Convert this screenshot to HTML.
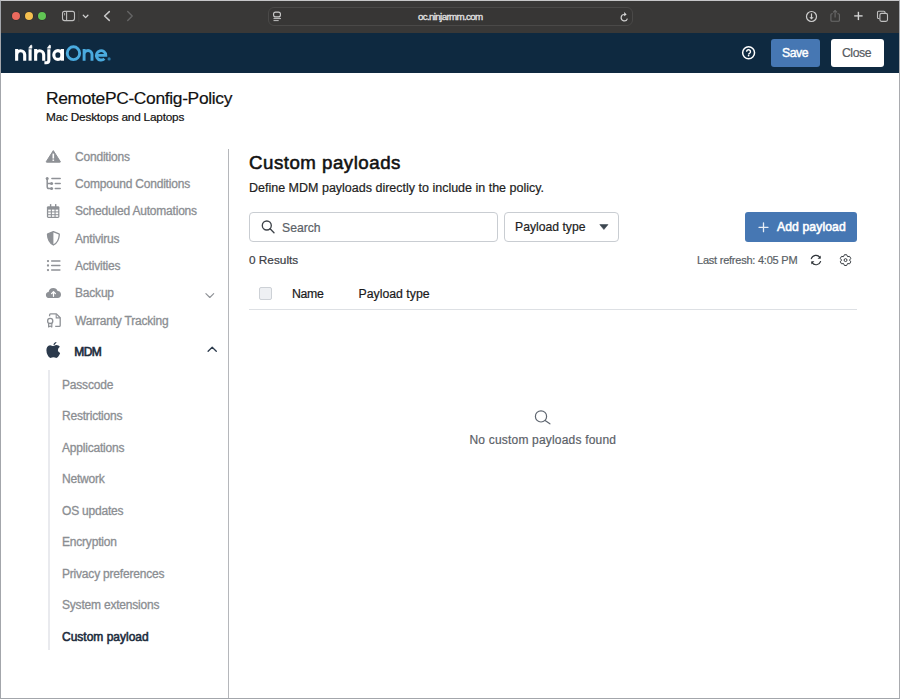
<!DOCTYPE html>
<html><head><meta charset="utf-8">
<style>
*{box-sizing:border-box;margin:0;padding:0}
html,body{width:900px;height:699px;overflow:hidden;background:#fff;font-family:"Liberation Sans",sans-serif}
.abs{position:absolute}
.t{position:absolute;line-height:1;white-space:nowrap;-webkit-text-stroke:0.2px currentColor}
.side,.sub{-webkit-text-stroke:0.3px currentColor}
.sb{-webkit-text-stroke:0.55px currentColor;font-weight:normal}
#frame{position:absolute;left:0;top:0;width:900px;height:699px;border-left:1px solid #a3a6ab;border-top:1px solid #c6c6c8;border-right:1px solid #a9abaf;border-bottom:1px solid #a3a6ab;pointer-events:none;z-index:10}
#toolbar{position:absolute;left:0;top:0;width:900px;height:33px;background:#393837}
#header{position:absolute;left:0;top:33px;width:900px;height:40px;background:#0e2940}
.side{font-size:12px;color:#8b8e92;left:75px;letter-spacing:-0.2px}
.sub{font-size:12px;color:#8b8e92;left:62px;letter-spacing:-0.2px}
svg{position:absolute;overflow:visible}
</style></head><body>
<div id="toolbar">
  <div class="abs" style="left:12.3px;top:12.2px;width:8.2px;height:8.2px;border-radius:50%;background:#ec6a5e;box-shadow:0 0 0 0.6px rgba(0,0,0,0.25)"></div>
  <div class="abs" style="left:25px;top:12.2px;width:8.2px;height:8.2px;border-radius:50%;background:#f4bf4f;box-shadow:0 0 0 0.6px rgba(0,0,0,0.25)"></div>
  <div class="abs" style="left:37.6px;top:12.2px;width:8.2px;height:8.2px;border-radius:50%;background:#61c554;box-shadow:0 0 0 0.6px rgba(0,0,0,0.25)"></div>
  <div class="abs" style="left:268px;top:7px;width:365px;height:19px;border-radius:6px;background:#373635;border:1px solid #4a4948"></div>

  <svg width="900" height="33" style="left:0;top:0">
    <g fill="none" stroke="#bfbfbf" stroke-width="1.1">
      <rect x="62.5" y="11.4" width="12" height="9.2" rx="2"/>
      <line x1="66.6" y1="11.4" x2="66.6" y2="20.6"/>
    </g>
    <rect x="64" y="13" width="1.1" height="2.4" fill="#9a9a9a"/>
    <line x1="78.8" y1="10.5" x2="78.8" y2="22" stroke="#474645" stroke-width="1"/>
    <polyline points="83.3,15.3 85.6,17.6 87.9,15.3" fill="none" stroke="#d0d0d0" stroke-width="1.3" stroke-linecap="round" stroke-linejoin="round"/>
    <polyline points="109.3,11.6 104.6,16 109.3,20.4" fill="none" stroke="#c9c9c9" stroke-width="1.5" stroke-linecap="round" stroke-linejoin="round"/>
    <polyline points="127.7,11.6 132.2,16 127.7,20.4" fill="none" stroke="#656565" stroke-width="1.4" stroke-linecap="round" stroke-linejoin="round"/>
    <g fill="none" stroke="#cfcfcf" stroke-width="1.1">
      <rect x="273.6" y="12.1" width="6.8" height="4.8" rx="2"/>
    </g>
    <line x1="273.5" y1="18.6" x2="281" y2="18.6" stroke="#cfcfcf" stroke-width="0.9"/>
    <line x1="273.5" y1="20.6" x2="278.7" y2="20.6" stroke="#cfcfcf" stroke-width="0.9"/>
    <path d="M627.4 18.6 A3.2 3.2 0 1 1 624.6 14.5" fill="none" stroke="#cfcfcf" stroke-width="1.2"/>
    <polygon points="624.2,12.1 626.6,14.4 624.2,16.3" fill="#dcdcdc"/>
    <circle cx="811.5" cy="16.5" r="5" fill="none" stroke="#cfcfcf" stroke-width="1.2"/>
    <line x1="811.5" y1="13.4" x2="811.5" y2="18" stroke="#cfcfcf" stroke-width="1.2"/>
    <polygon points="809.3,17.2 813.7,17.2 811.5,19.4" fill="#cfcfcf"/>
    <g fill="none" stroke="#6a6a6a" stroke-width="1.1">
      <path d="M832.8 13.8 H831.8 Q830.9 13.8 830.9 14.8 V20.2 Q830.9 21.2 831.9 21.2 H838.4 Q839.4 21.2 839.4 20.2 V14.8 Q839.4 13.8 838.4 13.8 H837.4"/>
      <line x1="835.1" y1="10.6" x2="835.1" y2="17.5"/>
      <polyline points="833.2,12.4 835.1,10.5 837,12.4"/>
    </g>
    <g stroke="#d2d2d2" stroke-width="1.4">
      <line x1="858.4" y1="11.8" x2="858.4" y2="20.1"/>
      <line x1="854.2" y1="15.9" x2="862.6" y2="15.9"/>
    </g>
    <g fill="none" stroke="#c0c0c0" stroke-width="1.1">
      <path d="M879.4 18.5 H878.6 Q877.5 18.5 877.5 17.4 V12.3 Q877.5 11.2 878.6 11.2 H883.9 Q885 11.2 885 12.3 V13.3"/>
      <rect x="879.9" y="13.4" width="7.6" height="8" rx="1.6"/>
    </g>
  </svg>
  <div class="t" style="left:418px;top:12px;font-size:9.8px;color:#e4e4e4;letter-spacing:-0.67px;-webkit-text-stroke:0.3px #e4e4e4">oc.ninjarmm.com</div>
</div>
<div id="header">
  <svg width="900" height="40" style="left:0;top:0">
   <g transform="translate(0,-33)">
    <g fill="none" stroke="#fff" stroke-width="3.1">
      <path d="M16.65 49 V60.7 M16.65 60.7 V54.55 A4.03 4.03 0 0 1 24.7 54.55 V60.7"/>
      <path d="M30.1 49.2 V60.7"/>
      <path d="M35.65 49 V60.7 M35.65 60.7 V54.55 A4.03 4.03 0 0 1 43.7 54.55 V60.7"/>
      <path d="M48.85 49.2 V60.3 Q48.85 62.7 46.3 62.7 H44.4"/>
      <ellipse cx="57.9" cy="55" rx="4.1" ry="4.4"/>
      <path d="M62.35 49 V60.7" stroke-width="3.3"/>
    </g>
    <polygon points="28.7,48.2 30.5,45.5 31.3,45.1 31.9,45.5 31.9,48.2" fill="#fff" stroke="#fff" stroke-width="0.6" stroke-linejoin="round"/>
    <polygon points="47.3,48.2 49.1,45.5 49.9,45.1 50.5,45.5 50.5,48.2" fill="#fff" stroke="#fff" stroke-width="0.6" stroke-linejoin="round"/>
    <g fill="none" stroke="#4aabdf" stroke-width="2.9">
      <ellipse cx="73.45" cy="53.2" rx="6.2" ry="6.45"/>
      <path d="M84.1 49 V60.7 M84.1 60.7 V54.5 A3.95 3.95 0 0 1 92 54.5 V60.7"/>
      <path d="M96.6 55.4 H105.8 A4.7 4.7 0 1 0 104.4 58.7"/>
    </g>
    <circle cx="109.1" cy="58.9" r="1.6" fill="#2b76a6"/>
    <circle cx="748.6" cy="52.7" r="5.95" fill="none" stroke="#fff" stroke-width="1.5"/>
    <path d="M746.6 51.8 A1.95 1.95 0 1 1 749.6 53.3 Q748.6 53.8 748.6 54.4" fill="none" stroke="#fff" stroke-width="1.4"/>
    <circle cx="748.6" cy="55.6" r="0.85" fill="#fff"/>
   </g>
  </svg>
  <div class="abs" style="left:771px;top:6px;width:49px;height:28px;background:#4677b3;border-radius:3px"></div>
  <div class="t sb" style="left:782.3px;top:12.5px;font-size:13.3px;color:#fff;letter-spacing:-0.5px;-webkit-text-stroke:0.45px #fff;transform:scaleX(0.92);transform-origin:0 0">Save</div>
  <div class="abs" style="left:831px;top:6px;width:53px;height:28px;background:#fff;border-radius:3px"></div>
  <div class="t" style="left:842px;top:12.5px;font-size:13.3px;color:#555a60;letter-spacing:-0.5px;transform:scaleX(0.92);transform-origin:0 0">Close</div>
</div>

<div class="t" style="left:46px;top:90px;font-size:17.4px;color:#111;letter-spacing:-0.33px">RemotePC-Config-Policy</div>
<div class="t" style="left:46px;top:112px;font-size:11.8px;color:#111;letter-spacing:-0.2px">Mac Desktops and Laptops</div>

<div class="t side" style="top:150.8px">Conditions</div>
<div class="t side" style="top:177.8px">Compound Conditions</div>
<div class="t side" style="top:205.3px">Scheduled Automations</div>
<div class="t side" style="top:232.8px">Antivirus</div>
<div class="t side" style="top:259.8px">Activities</div>
<div class="t side" style="top:287.3px">Backup</div>
<div class="t side" style="top:314.8px">Warranty Tracking</div>
<div class="t side sb" style="top:346px;color:#1e2d3e;font-size:12px;letter-spacing:-0.55px;left:74.3px;-webkit-text-stroke:0.65px #1e2d3e">MDM</div>

<div class="abs" style="left:48px;top:370px;width:1.5px;height:280px;background:#e9eaee"></div>
<div class="t sub" style="top:378.5px">Passcode</div>
<div class="t sub" style="top:410px">Restrictions</div>
<div class="t sub" style="top:441.5px">Applications</div>
<div class="t sub" style="top:473px">Network</div>
<div class="t sub" style="top:504.5px">OS updates</div>
<div class="t sub" style="top:536px">Encryption</div>
<div class="t sub" style="top:567.5px">Privacy preferences</div>
<div class="t sub" style="top:599px">System extensions</div>
<div class="t sub sb" style="top:630.5px;color:#1c2b3c;letter-spacing:0px">Custom payload</div>

<div class="abs" style="left:228px;top:149px;width:1px;height:550px;background:#b5b7bb"></div>

<div class="t sb" style="left:249px;top:154px;font-size:18.7px;color:#111;letter-spacing:0.5px">Custom payloads</div>
<div class="t" style="left:249px;top:181.5px;font-size:12.5px;color:#222">Define MDM payloads directly to include in the policy.</div>

<div class="abs" style="left:249px;top:212px;width:249px;height:30px;border:1px solid #c9cdd2;border-radius:4px"></div>
<div class="t" style="left:282px;top:221.5px;font-size:12.2px;color:#5b6167">Search</div>
<div class="abs" style="left:504px;top:212px;width:115px;height:30px;border:1px solid #c9cdd2;border-radius:4px"></div>
<div class="t" style="left:515px;top:220.5px;font-size:12.2px;color:#222">Payload type</div>
<div class="abs" style="left:745px;top:212px;width:112px;height:30px;background:#4677b3;border-radius:3px"></div>
<div class="t sb" style="left:777px;top:220.5px;font-size:12.2px;color:#fff;letter-spacing:0.1px">Add payload</div>

<div class="t" style="left:249px;top:254.5px;font-size:11.8px;color:#3c4045">0 Results</div>
<div class="t" style="left:697px;top:254.5px;font-size:11px;color:#5a5f66;letter-spacing:-0.23px">Last refresh: 4:05 PM</div>

<div class="abs" style="left:259px;top:287px;width:13px;height:13px;border:1px solid #cdd1d6;border-radius:2px;background:#eef0f3"></div>
<div class="t" style="left:292px;top:287.5px;font-size:12.3px;color:#1a1a1a;letter-spacing:-0.3px">Name</div>
<div class="t" style="left:358.5px;top:287.5px;font-size:12.3px;color:#1a1a1a">Payload type</div>
<div class="abs" style="left:249px;top:309px;width:608px;height:1px;background:#dde0e4"></div>

<div class="t" style="left:469.5px;top:433.5px;font-size:12px;color:#5b6168;letter-spacing:0.19px">No custom payloads found</div>

<svg width="900" height="699" style="left:0;top:0">
  <!-- warning triangle -->
  <path d="M53.3 150.6 L60.3 161.6 Q60.6 162.2 59.9 162.2 H46.7 Q46 162.2 46.3 161.6 Z" fill="#8e9196" stroke="#8e9196" stroke-width="1" stroke-linejoin="round"/>
  <rect x="52.5" y="153.6" width="1.6" height="4.9" fill="#fff"/>
  <rect x="52.5" y="159.5" width="1.6" height="1.4" fill="#fff"/>
  <!-- compound -->
  <g fill="none" stroke="#8e9196" stroke-width="1.5" stroke-linecap="round">
    <path d="M47.2 178.6 V186.8 Q47.2 188.6 49 188.6 H51.3 M47.2 183.6 H51.3"/>
    <path d="M51.9 178.6 H60.2 M55.3 183.6 H60.2 M55.3 188.6 H60.2"/>
  </g>
  <circle cx="47.2" cy="178.6" r="1.5" fill="#8e9196"/>
  <circle cx="51.6" cy="183.6" r="1.5" fill="#8e9196"/>
  <circle cx="51.6" cy="188.6" r="1.5" fill="#8e9196"/>
  <!-- calendar -->
  <rect x="46.9" y="206.2" width="12.5" height="11.7" rx="1.4" fill="#8e9196"/>
  <rect x="49.9" y="204.1" width="1.4" height="3" fill="#8e9196"/>
  <rect x="55" y="204.1" width="1.4" height="3" fill="#8e9196"/>
  <g fill="#fff">
    <rect x="48.2" y="209.6" width="2.6" height="1.8"/><rect x="51.9" y="209.6" width="2.6" height="1.8"/><rect x="55.6" y="209.6" width="2.6" height="1.8"/>
    <rect x="48.2" y="212.4" width="2.6" height="1.8"/><rect x="51.9" y="212.4" width="2.6" height="1.8"/><rect x="55.6" y="212.4" width="2.6" height="1.8"/>
    <rect x="48.2" y="215.2" width="2.6" height="1.6"/><rect x="51.9" y="215.2" width="2.6" height="1.6"/><rect x="55.6" y="215.2" width="2.6" height="1.6"/>
  </g>
  <!-- shield -->
  <path d="M53.4 231.6 L58.9 233.9 Q59.4 234.1 59.3 234.7 Q58.9 242.1 53.4 245 Q47.9 242.1 47.5 234.7 Q47.4 234.1 47.9 233.9 Z" fill="none" stroke="#8e9196" stroke-width="1.3" stroke-linejoin="round"/>
  <path d="M53.4 231.6 L47.9 233.9 Q47.4 234.1 47.5 234.7 Q47.9 242.1 53.4 245 Z" fill="#8e9196"/>
  <!-- list -->
  <g fill="#8e9196">
    <circle cx="48" cy="261.1" r="1.15"/><circle cx="48" cy="265.5" r="1.15"/><circle cx="48" cy="270.1" r="1.15"/>
  </g>
  <g stroke="#8e9196" stroke-width="1.5" stroke-linecap="round">
    <line x1="51.7" y1="261.1" x2="59.9" y2="261.1"/><line x1="51.7" y1="265.5" x2="59.9" y2="265.5"/><line x1="51.7" y1="270.1" x2="59.9" y2="270.1"/>
  </g>
  <!-- cloud upload -->
  <path d="M49.4 298 Q45.9 298 45.9 294.9 Q45.9 292.3 48.6 291.9 Q49.3 288 53.3 288 Q56.6 288 57.6 291 Q61 291.4 61 294.6 Q61 298 57.6 298 Z" fill="#8e9196"/>
  <path d="M53.5 296.3 V291.9 M51.6 293.6 L53.5 291.6 L55.4 293.6" fill="none" stroke="#fff" stroke-width="1.3" stroke-linecap="round" stroke-linejoin="round"/>
  <!-- warranty -->
  <path d="M49.6 316.3 V314.9 Q49.6 313.9 50.6 313.9 H56.4 L60.2 317.7 V325.4 Q60.2 326.4 59.2 326.4 H55.2" fill="none" stroke="#8e9196" stroke-width="1.3" stroke-linejoin="round"/>
  <path d="M56.2 313.9 V317.9 H60.2" fill="none" stroke="#8e9196" stroke-width="1.1"/>
  <circle cx="50.2" cy="320.9" r="2.6" fill="none" stroke="#8e9196" stroke-width="1.3"/>
  <path d="M48.6 323 V327 L50.2 326 L51.8 327 V323" fill="none" stroke="#8e9196" stroke-width="1.2" stroke-linejoin="round"/>
  <!-- apple -->
  <path d="M57.9 350.3 Q57.9 347.9 59.9 346.8 Q58.7 345.1 56.5 345.1 Q55.2 345.1 54.1 345.7 Q53.5 346 53.1 346 Q52.6 346 51.9 345.7 Q51 345.2 50.1 345.2 Q48.3 345.3 47.2 346.9 Q46.4 348.2 46.4 350.2 Q46.4 352.6 47.6 355 Q48.9 358 50.5 358 Q51.2 358 51.9 357.6 Q52.6 357.2 53.4 357.2 Q54.3 357.2 55 357.6 Q55.6 358 56.3 358 Q57.9 358 59.1 355.3 Q59.7 354 60.1 352.9 Q57.9 352.1 57.9 350.3 Z M55.6 343.6 Q56.6 342.4 56.5 341.9 Q55.2 342 54.3 343 Q53.3 344.1 53.5 345.2 Q54.7 345.2 55.6 343.6 Z" fill="#2b3a4c"/>
  <!-- chevrons -->
  <polyline points="205.9,293.6 209.8,297.5 213.7,293.6" fill="none" stroke="#8e9196" stroke-width="1.1" stroke-linecap="round" stroke-linejoin="round"/>
  <polyline points="208.1,351.3 212.2,347.2 216.3,351.3" fill="none" stroke="#2b3a4c" stroke-width="1.3" stroke-linecap="round" stroke-linejoin="round"/>
  <!-- search -->
  <circle cx="266.8" cy="225.5" r="4.5" fill="none" stroke="#3e4349" stroke-width="1.35"/>
  <line x1="270.1" y1="228.8" x2="274" y2="232.7" stroke="#3e4349" stroke-width="1.35" stroke-linecap="round"/>
  <!-- caret -->
  <path d="M599.8 224.6 H608 L603.9 229.5 Z" fill="#3c4650" stroke="#3c4650" stroke-width="0.6" stroke-linejoin="round"/>
  <!-- plus -->
  <g stroke="#e8eef6" stroke-width="1.3" stroke-linecap="round">
    <line x1="763.5" y1="222.9" x2="763.5" y2="231.7"/><line x1="759" y1="227.3" x2="768" y2="227.3"/>
  </g>
  <!-- refresh -->
  <g fill="none" stroke="#2e3338" stroke-width="1.15" stroke-linecap="round">
    <path d="M811.3 258.6 A4.9 4.9 0 0 1 819.9 257.4"/>
    <path d="M820.6 261.5 A4.9 4.9 0 0 1 812 262.7"/>
  </g>
  <polygon points="820.7,255.6 820.7,258.8 817.6,258.8" fill="#2e3338"/>
  <polygon points="811.3,264.5 811.3,261.3 814.4,261.3" fill="#2e3338"/>
  <!-- gear -->
  <path d="M843.55 256.64 L844.41 254.72 L846.69 254.72 L847.55 256.64 L849.64 256.42 L850.78 258.40 L849.55 260.10 L850.78 261.80 L849.64 263.78 L847.55 263.56 L846.69 265.48 L844.41 265.48 L843.55 263.56 L841.46 263.78 L840.32 261.80 L841.55 260.10 L840.32 258.40 L841.46 256.42 Z" fill="none" stroke="#363b40" stroke-width="1.0" stroke-linejoin="round"/>
  <circle cx="845.55" cy="260.1" r="1.45" fill="none" stroke="#363b40" stroke-width="1.0"/>
  <!-- empty search -->
  <circle cx="541" cy="416.4" r="5.6" fill="none" stroke="#5f6670" stroke-width="1.2"/>
  <line x1="545.1" y1="420.5" x2="549.9" y2="423.8" stroke="#5f6670" stroke-width="1.2" stroke-linecap="round"/>
</svg>
<div id="frame"></div>
</body></html>
